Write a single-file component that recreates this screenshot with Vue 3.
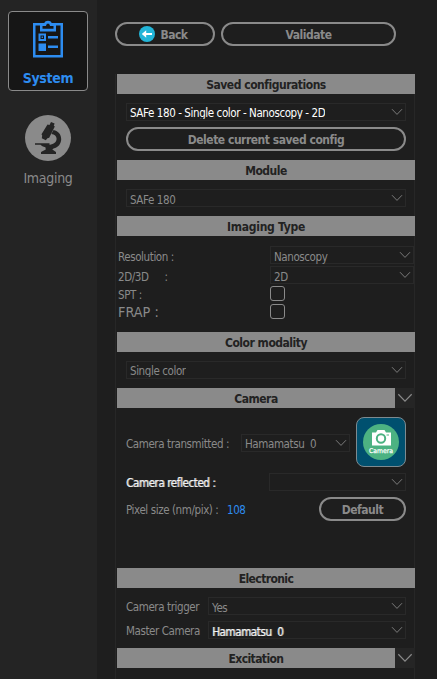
<script setup>
import { h } from 'vue'

const Chevron = (props) =>
  h('svg', { class: 'chevron', width: props.size, height: props.size, viewBox: '0 0 12 12', fill: 'none' }, [
    h('path', { d: 'M1 3.2 L6 8.4 L11 3.2', stroke: 'currentColor', 'stroke-width': 0.9 }),
  ])
Chevron.props = ['size']
</script>

<template>
  <div class="app">
    <nav class="sidebar">
      <a class="nav-item active">
        <svg class="clipboard" width="30" height="38" viewBox="0 0 30 38">
          <path d="M1.25 4.25H28.75V36.25H1.25Z" fill="none" stroke="#2d8cf0" stroke-width="2.500" />
          <path d="M7 3h4.200a4 3.400 0 0 1 7.600 0H23v8.500H7Z" fill="#2d8cf0" />
          <path d="M9.500 6h3.400l1-2.200h2.200l1 2.200h3.400v2.700h-11Z" fill="#161616" />
          <path d="M5.500 13.500h7.500v7.500H5.500ZM5.500 23.500h7.500v7.500H5.500ZM15 16h10v2.500H15ZM15 25.500h10v2.500H15Z" fill="#2d8cf0" />
          <path d="M7.500 15.500h3.500v3.500h-3.500Z" fill="#161616" />
          <path d="M8.600 16.600h1.300v1.300h-1.300Z" fill="#2d8cf0" />
        </svg>
        <span class="nav-label">System</span>
      </a>
      <a class="nav-item">
        <svg class="microscope" width="46" height="46" viewBox="0 0 46 46">
          <circle cx="23" cy="23" r="23" fill="#8a8a8a" />
          <g fill="#242424">
            <path d="M26 7l3.600 1.600-.8 2.200 1 .8-5.600 11.200-1.800.4-1.600 2-4-2 .4-2.600-.7-1.400L22.500 9.500l2 .4Z" />
            <path d="M28.500 15C33.500 16 36.200 19.600 36.200 24c0 4.800-3 8.400-7.700 9.600L27.300 34.500 31 37v2H16v-2l4.800-2.600-.4-2.200C18 31.800 16.500 31 15.500 29.800H10v-1.500h14.500v1.500h-1.500c5 .2 8.600-2.300 8.600-6 0-2.600-2-4.500-5.200-4.700Z" />
          </g>
        </svg>
        <span class="nav-label">Imaging</span>
      </a>
    </nav>

    <main class="main">
      <div class="toolbar">
        <button class="pill back">
          <svg width="16" height="16" viewBox="0 0 16 16">
            <circle cx="8" cy="8" r="8" fill="#22b5d8" />
            <path d="M2.800 8L7.200 4.200V6.900H13V9.100H7.200V11.800Z" fill="#fff" />
          </svg>
          <span>Back</span>
        </button>
        <button class="pill validate"><span>Validate</span></button>
      </div>

      <div class="panel">
        <h2 class="heading">Saved configurations</h2>
        <section class="body saved">
          <div class="select bright clipped"><span>SAFe 180 - Single color - Nanoscopy - 2D</span><Chevron :size="12" /></div>
          <button class="pill"><span>Delete current saved config</span></button>
        </section>

        <h2 class="heading">Module</h2>
        <section class="body single">
          <div class="select"><span>SAFe 180</span><Chevron :size="12" /></div>
        </section>

        <h2 class="heading wide">Imaging Type</h2>
        <section class="body imaging">
          <div class="field"><label>Resolution :</label><div class="select"><span>Nanoscopy</span><Chevron :size="12" /></div></div>
          <div class="field"><label>2D/3D <i class="colon">:</i></label><div class="select"><span>2D</span><Chevron :size="12" /></div></div>
          <div class="field check"><label>SPT :</label><span class="box"></span></div>
          <div class="field check"><label class="large">FRAP :</label><span class="box"></span></div>
        </section>

        <h2 class="heading">Color modality</h2>
        <section class="body single">
          <div class="select clipped"><span>Single color</span><Chevron :size="12" /></div>
        </section>

        <div class="collapsible">
          <h2 class="heading">Camera</h2>
          <button class="toggle"><Chevron :size="16" /></button>
        </div>
        <section class="body camera">
          <div class="transmitted">
            <label>Camera transmitted :</label>
            <div class="select"><span>Hamamatsu&nbsp; 0</span><Chevron :size="12" /></div>
            <button class="camera-button">
              <svg width="36" height="36" viewBox="0 0 36 36">
                <circle cx="18" cy="18" r="18" fill="#4cb282" />
                <path d="M9 8.500h4L14.500 6h7L23 8.500H28V21.500H9Z" fill="#fff" />
                <circle cx="18" cy="14.500" r="4.200" fill="#fff" stroke="#4cb282" stroke-width="2" />
                <path d="M23.500 11h2.500" stroke="#4cb282" />
                <text x="18" y="29" text-anchor="middle" textLength="24" lengthAdjust="spacingAndGlyphs" class="camera-text">Camera</text>
              </svg>
            </button>
          </div>
          <div class="reflected">
            <label class="doubled">Camera reflected :</label>
            <div class="select"><span></span><Chevron :size="12" /></div>
          </div>
          <div class="pixel">
            <label>Pixel size (nm/pix) :</label>
            <span class="value">108</span>
            <button class="pill default"><span>Default</span></button>
          </div>
        </section>

        <h2 class="heading narrow">Electronic</h2>
        <section class="body electronic">
          <div class="field"><label>Camera trigger</label><div class="select"><span>Yes</span><Chevron :size="12" /></div></div>
          <div class="field"><label>Master Camera</label><div class="select"><span class="doubled">Hamamatsu&nbsp; 0</span><Chevron :size="12" /></div></div>
        </section>

        <div class="collapsible">
          <h2 class="heading narrow">Excitation</h2>
          <button class="toggle"><Chevron :size="16" /></button>
        </div>
      </div>
    </main>
  </div>
</template>

<style>
body {
  background: #1e1e1e;
  overflow: hidden;
}
</style>

<style scoped>
* {
  box-sizing: border-box;
}
.app {
  display: flex;
  height: 679px;
  background: #1e1e1e;
  color: #8a8a8a;
  font: 11.5px/16px "DejaVu Sans Condensed", "DejaVu Sans", sans-serif;
  letter-spacing: -0.41px;
  white-space: nowrap;
}
button {
  font: inherit;
  letter-spacing: inherit;
  color: inherit;
  padding: 0;
  margin: 0;
}
svg {
  flex: none;
}
.sidebar {
  width: 97px;
  background: #242424;
  padding: 11px 9px 0 8px;
  display: flex;
  flex-direction: column;
  gap: 13px;
}
.nav-item {
  display: flex;
  flex-direction: column;
  align-items: center;
  height: 80px;
  border: 1px solid transparent;
  border-radius: 4px;
  padding-top: 10px;
  gap: 7px;
  font-size: 14px;
  line-height: 20px;
  letter-spacing: -0.3px;
}
.nav-item.active {
  background: #161616;
  border-color: #8a8a8a;
  color: #2d8cf0;
  font-weight: bold;
  padding-top: 8px;
  gap: 10px;
}
.main {
  flex: 1;
  padding: 22px 22px 0 18px;
  display: flex;
  flex-direction: column;
}
.toolbar {
  display: flex;
  gap: 6px;
  margin-bottom: 28px;
}
.pill {
  display: flex;
  align-items: center;
  justify-content: center;
  height: 24px;
  border: 2px solid #8a8a8a;
  border-radius: 12px;
  background: transparent;
  font-size: 12px;
  font-weight: bold;
  letter-spacing: -0.48px;
}
.pill span {
  padding-top: 2px;
}
.back {
  width: 100px;
  gap: 5px;
  padding-right: 3px;
}
.validate {
  width: 175px;
}
.panel {
  flex: 1;
  border: solid #272727;
  border-width: 0 1px;
  width: 300px;
}
.heading {
  margin: 0 -1px 0 1px;
  height: 20px;
  background: #8a8a8a;
  color: #222;
  font-size: 12px;
  line-height: 23px;
  font-weight: bold;
  letter-spacing: -0.48px;
  text-align: center;
}
.heading.wide {
  letter-spacing: -0.27px;
}
.heading.narrow {
  letter-spacing: -0.6px;
}
.body {
  display: flex;
  flex-direction: column;
  padding: 9px 8px 0 10px;
}
.saved {
  height: 66px;
  gap: 6px;
}
.single {
  height: 36px;
}
.select {
  display: flex;
  align-items: center;
  justify-content: space-between;
  height: 18px;
  border: 1px solid #292929;
  padding: 1px 2px 0 3px;
}
.select span {
  height: 16px;
  line-height: 18px;
}
.select .chevron {
  margin-bottom: 1px;
  color: #858585;
}
.select.clipped span {
  height: 14px;
  line-height: 17px;
  margin-bottom: 2px;
  overflow: hidden;
}
.bright {
  color: #fff;
}
.imaging {
  height: 96px;
  padding: 10px 0 0 2px;
}
.imaging .field {
  display: grid;
  grid-template-columns: 152px 1fr;
  height: 20px;
}
.imaging .field label {
  padding-top: 3px;
}
.imaging .field.check {
  height: 18px;
}
.imaging .field.check label {
  padding-top: 1px;
}
.imaging .field.check .large {
  padding-top: 0;
  font-size: 14.3px;
  letter-spacing: 0;
}
.colon {
  font-style: normal;
  margin-left: 13px;
}
.box {
  width: 15px;
  height: 15px;
  border: 1px solid #8a8a8a;
  border-radius: 3px;
}
.collapsible {
  display: flex;
  margin-right: -1px;
}
.collapsible .heading {
  flex: 1;
  margin-right: 0;
}
.toggle {
  width: 20px;
  height: 20px;
  border: 0;
  background: #252525;
  display: flex;
  align-items: center;
  justify-content: center;
}
.camera {
  height: 160px;
}
.transmitted {
  display: grid;
  grid-template-columns: 115px 109px 56px;
  align-items: center;
  height: 50px;
}
.transmitted label {
  padding-top: 3px;
}
.transmitted .select {
  margin-top: 1px;
}
.camera-button {
  width: 50px;
  height: 50px;
  margin-left: 6px;
  border: 1px solid #7d8a90;
  border-radius: 8px;
  background: #00506f;
  display: flex;
  align-items: center;
  justify-content: center;
}
.camera-text {
  font: 6.5px "DejaVu Sans", sans-serif;
  letter-spacing: 0;
  fill: #fff;
  stroke: #fff;
  stroke-width: 0.25px;
}
.reflected {
  display: grid;
  grid-template-columns: 143px 1fr;
  height: 18px;
  margin-top: 6px;
}
.reflected label {
  padding-top: 2px;
}
.doubled {
  color: #f2f2f2;
  text-shadow: 1px 0 #a0a0a0;
}
.pixel {
  display: grid;
  grid-template-columns: 101px 92px 1fr;
  align-items: center;
  margin-top: 6px;
}
.pixel label {
  padding-top: 1px;
}
.value {
  color: #2d8cf0;
  padding-top: 2px;
}
.electronic {
  height: 60px;
  gap: 6px;
}
.electronic .field {
  display: grid;
  grid-template-columns: 82px 1fr;
  height: 18px;
}
.electronic label {
  padding-top: 2px;
}
</style>
